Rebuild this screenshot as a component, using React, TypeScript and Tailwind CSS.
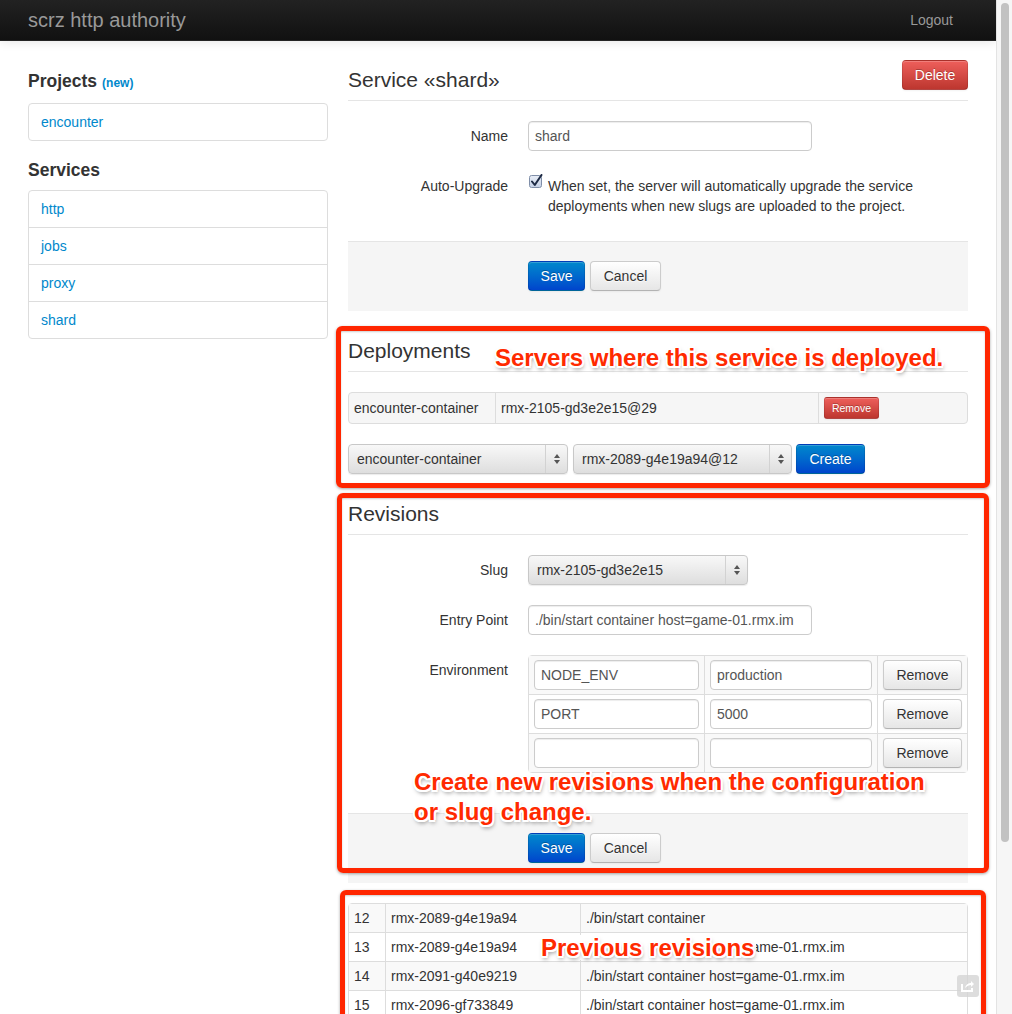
import React from "react";

const btnBase =
  "inline-flex items-center justify-center h-[30px] px-[12px] rounded-[4px] border text-[14px] leading-[20px] whitespace-nowrap";
const btnDefault =
  "border-[#cccccc] border-b-[#b3b3b3] bg-linear-to-b from-[#ffffff] to-[#e6e6e6] text-[#333333] [text-shadow:0_1px_1px_rgba(255,255,255,0.75)] shadow-[inset_0_1px_0_rgba(255,255,255,0.2),0_1px_2px_rgba(0,0,0,0.05)]";
const btnPrimary =
  "border-[rgba(0,0,0,0.1)] border-b-[rgba(0,0,0,0.25)] bg-linear-to-b from-[#0088cc] to-[#0044cc] text-white [text-shadow:0_-1px_0_rgba(0,0,0,0.25)] shadow-[inset_0_1px_0_rgba(255,255,255,0.2),0_1px_2px_rgba(0,0,0,0.05)]";
const btnDanger =
  "border-[rgba(0,0,0,0.1)] border-b-[rgba(0,0,0,0.25)] bg-linear-to-b from-[#ee5f5b] to-[#bd362f] text-white [text-shadow:0_-1px_0_rgba(0,0,0,0.25)] shadow-[inset_0_1px_0_rgba(255,255,255,0.2),0_1px_2px_rgba(0,0,0,0.05)]";

const inputCls =
  "block h-[30px] rounded-[4px] border border-[#cccccc] bg-white px-[6px] py-[4px] text-[14px] leading-[20px] text-[#555555] shadow-[inset_0_1px_1px_rgba(0,0,0,0.075)] outline-none";

const annot =
  "absolute z-20 whitespace-nowrap font-bold text-[24px] leading-[30px] text-[#ff2a00] [text-shadow:2px_0_0_#fff,-2px_0_0_#fff,0_2px_0_#fff,0_-2px_0_#fff,1.5px_1.5px_0_#fff,-1.5px_1.5px_0_#fff,1.5px_-1.5px_0_#fff,-1.5px_-1.5px_0_#fff,1px_3px_4px_rgba(0,0,0,0.5)]";

const redBox =
  "absolute z-10 rounded-[6px] border-[5px] border-[#ff2600] shadow-[0_1px_3px_rgba(0,0,0,0.35),inset_0_1px_2px_rgba(0,0,0,0.2)]";

function Arrows() {
  return (
    <svg width="8" height="12" viewBox="0 0 8 12">
      <path d="M4 1 L7 5 L1 5 Z" fill="#555" />
      <path d="M4 11 L7 7 L1 7 Z" fill="#555" />
    </svg>
  );
}

function FakeSelect({ value, width }: { value: string; width: string }) {
  return (
    <div
      className={`flex h-[30px] items-center rounded-[4px] border border-[#c8c8c8] bg-linear-to-b from-[#f8f8f8] to-[#dedede] text-[14px] text-[#333] shadow-[0_1px_1px_rgba(0,0,0,0.08)] ${width}`}
    >
      <span className="flex-1 truncate pl-[8px]">{value}</span>
      <span className="flex h-full w-[22px] items-center justify-center border-l border-[#d2d2d2]">
        <Arrows />
      </span>
    </div>
  );
}

function Checkbox() {
  return (
    <svg width="15" height="15" viewBox="0 0 15 15" className="absolute left-[1px] top-[3px]">
      <defs>
        <linearGradient id="cbg" x1="0" y1="0" x2="0" y2="1">
          <stop offset="0" stopColor="#e9eef7" />
          <stop offset="1" stopColor="#c5d1e6" />
        </linearGradient>
      </defs>
      <rect x="0.5" y="1.5" width="12" height="12" rx="2" fill="url(#cbg)" stroke="#7f8ea8" />
      <path d="M3 7.5 L5.8 11 L12.5 1" fill="none" stroke="#1d2a44" strokeWidth="2" strokeLinecap="round" strokeLinejoin="round" />
    </svg>
  );
}

function Label({ children }: { children: React.ReactNode }) {
  return <div className="w-[160px] shrink-0 pt-[5px] text-right text-[#333]">{children}</div>;
}

function Legend({ children, right }: { children: React.ReactNode; right?: React.ReactNode }) {
  return (
    <div className="mb-[20px] flex h-[41px] items-start justify-between border-b border-[#e5e5e5]">
      <div className="text-[21px] leading-[40px] text-[#333]">{children}</div>
      {right}
    </div>
  );
}

function NavList({ items }: { items: string[] }) {
  return (
    <div className="rounded-[4px] border border-[#dddddd] bg-white">
      {items.map((it, i) => (
        <div
          key={it}
          className={`px-[12px] py-[8px] leading-[20px] text-[#0088cc] ${i > 0 ? "border-t border-[#dddddd]" : ""}`}
        >
          {it}
        </div>
      ))}
    </div>
  );
}

export default function App() {
  const env = [
    ["NODE_ENV", "production"],
    ["PORT", "5000"],
    ["", ""],
  ];
  const revs = [
    ["12", "rmx-2089-g4e19a94", "./bin/start container"],
    ["13", "rmx-2089-g4e19a94", "./bin/start container host=game-01.rmx.im"],
    ["14", "rmx-2091-g40e9219", "./bin/start container host=game-01.rmx.im"],
    ["15", "rmx-2096-gf733849", "./bin/start container host=game-01.rmx.im"],
    ["16", "rmx-2105-gd3e2e15", "./bin/start container host=game-01.rmx.im"],
  ];
  return (
    <div className="relative flex h-[1014px] w-[1012px] overflow-hidden bg-white font-['Liberation_Sans',Arial,sans-serif] text-[14px] leading-[20px] text-[#333333]">
      <div className="flex min-w-0 flex-1 flex-col">
        {/* navbar */}
        <div className="h-[41px] shrink-0 border-b border-[#252525] bg-linear-to-b from-[#222222] to-[#111111] shadow-[0_1px_10px_rgba(0,0,0,0.1)]">
          <div className="mx-auto flex w-[940px] items-center justify-between">
            <div className="py-[10px] text-[20px] leading-[20px] text-[#999999]">scrz http authority</div>
            <div className="px-[15px] py-[10px] text-[#999999]">Logout</div>
          </div>
        </div>

        <div className="mx-auto flex w-[940px] gap-[20px] pt-[19px]">
          {/* sidebar */}
          <div className="w-[300px] shrink-0">
            <div className="mb-[12px] mt-[11px] flex h-[20px] items-baseline gap-[5px] text-[17.5px] font-bold leading-[20px] text-[#333]">
              <span>Projects</span>
              <span className="text-[12px] leading-[20px] text-[#0088cc]">(new)</span>
            </div>
            <NavList items={["encounter"]} />
            <div className="mb-[10px] mt-[19px] h-[20px] text-[17.5px] font-bold leading-[20px] text-[#333]">Services</div>
            <NavList items={["http", "jobs", "proxy", "shard"]} />
          </div>

          {/* main */}
          <div className="w-[620px] shrink-0">
            <Legend right={<button className={`${btnBase} ${btnDanger} w-[66px]`}>Delete</button>}>
              Service «shard»
            </Legend>

            <div className="mb-[20px] flex">
              <Label>Name</Label>
              <div className="ml-[20px]">
                <input readOnly defaultValue="shard" className={`${inputCls} w-[284px]`} />
              </div>
            </div>

            <div className="mb-[25px] flex">
              <Label>Auto-Upgrade</Label>
              <div className="relative ml-[20px] pl-[20px] pt-[5px]">
                <Checkbox />
                When set, the server will automatically upgrade the service
                <br />
                deployments when new slugs are uploaded to the project.
              </div>
            </div>

            <div className="mb-[20px] flex gap-[5px] border-t border-[#e5e5e5] bg-[#f5f5f5] pb-[20px] pl-[180px] pt-[19px]">
              <button className={`${btnBase} ${btnPrimary} w-[57px]`}>Save</button>
              <button className={`${btnBase} ${btnDefault} w-[71px]`}>Cancel</button>
            </div>

            <Legend>Deployments</Legend>

            <div className="mb-[20px] flex rounded-[4px] border border-[#dddddd] bg-[#f6f6f6]">
              <div className="w-[146px] px-[5px] py-[5px]">encounter-container</div>
              <div className="w-[323px] border-l border-[#dddddd] px-[5px] py-[5px]">rmx-2105-gd3e2e15@29</div>
              <div className="flex-1 border-l border-[#dddddd] px-[5px] py-[4px]">
                <button
                  className={`inline-flex h-[22px] w-[55px] items-center justify-center rounded-[3px] border text-[10.5px] leading-[20px] ${btnDanger}`}
                >
                  Remove
                </button>
              </div>
            </div>

            <div className="mb-[20px] flex items-center gap-[5px]">
              <FakeSelect value="encounter-container" width="w-[220px]" />
              <FakeSelect value="rmx-2089-g4e19a94@12" width="w-[219px]" />
              <button className={`${btnBase} ${btnPrimary} ml-[-1px] w-[69px]`}>Create</button>
            </div>

            <Legend>Revisions</Legend>

            <div className="mb-[20px] flex">
              <Label>Slug</Label>
              <div className="ml-[20px]">
                <FakeSelect value="rmx-2105-gd3e2e15" width="w-[220px]" />
              </div>
            </div>

            <div className="mb-[20px] flex">
              <Label>Entry Point</Label>
              <div className="ml-[20px]">
                <input
                  readOnly
                  defaultValue="./bin/start container host=game-01.rmx.im"
                  className={`${inputCls} w-[284px] text-[#333]`}
                />
              </div>
            </div>

            <div className="mb-[40px] flex">
              <Label>Environment</Label>
              <div className="ml-[20px] w-[440px] rounded-[4px] border border-[#dddddd]">
                {env.map((r, i) => (
                  <div
                    key={i}
                    className={`flex ${i > 0 ? "border-t border-[#dddddd]" : ""} ${i % 2 === 0 ? "bg-[#f9f9f9]" : "bg-white"}`}
                  >
                    <div className="w-[175px] px-[5px] py-[4px]">
                      <input readOnly defaultValue={r[0]} className={`${inputCls} w-full text-[#333]`} />
                    </div>
                    <div className="w-[173px] border-l border-[#dddddd] px-[5px] py-[4px]">
                      <input readOnly defaultValue={r[1]} className={`${inputCls} w-full text-[#333]`} />
                    </div>
                    <div className="flex-1 border-l border-[#dddddd] px-[5px] py-[4px]">
                      <button className={`${btnBase} ${btnDefault} w-[79px]`}>Remove</button>
                    </div>
                  </div>
                ))}
              </div>
            </div>

            <div className="mb-[20px] flex gap-[5px] border-t border-[#e5e5e5] bg-[#f5f5f5] pb-[20px] pl-[180px] pt-[19px]">
              <button className={`${btnBase} ${btnPrimary} w-[57px]`}>Save</button>
              <button className={`${btnBase} ${btnDefault} w-[71px]`}>Cancel</button>
            </div>

            <div className="rounded-[4px] border border-[#dddddd]">
              {revs.map((r, i) => (
                <div
                  key={r[0]}
                  className={`flex ${i > 0 ? "border-t border-[#dddddd]" : ""} ${i % 2 === 0 ? "bg-[#f9f9f9]" : "bg-white"}`}
                >
                  <div className="w-[36px] px-[5px] py-[4px]">{r[0]}</div>
                  <div className="w-[195px] border-l border-[#dddddd] px-[5px] py-[4px]">{r[1]}</div>
                  <div className="flex-1 border-l border-[#dddddd] px-[5px] py-[4px]">{r[2]}</div>
                </div>
              ))}
            </div>
          </div>
        </div>
      </div>

      {/* scrollbar */}
      <div className="flex w-[16px] shrink-0 flex-col items-center border-l border-[#e3e3e3] bg-[#f6f6f6] pt-[3px]">
        <div className="h-[839px] w-[8px] rounded-full bg-[#c2c2c2]" />
      </div>

      {/* annotation overlays */}
      <div className={`${redBox} left-[336px] top-[326px] h-[162px] w-[654px]`} />
      <div className={`${redBox} left-[337px] top-[493px] h-[380px] w-[652px]`} />
      <div className={`${redBox} left-[340px] top-[890px] h-[200px] w-[646px]`} />

      <div className={`${annot} left-[495px] top-[343px]`}>Servers where this service is deployed.</div>
      <div className={`${annot} left-[414px] top-[767px]`}>
        Create new revisions when the configuration
        <br />
        or slug change.
      </div>
      <div className="absolute left-[538px] top-[935px] z-[15] h-[25px] w-[218px] bg-white" />
      <div className={`${annot} left-[541px] top-[933px]`}>Previous revisions</div>

      <div className="absolute left-[957px] top-[975px] z-[5] flex h-[22px] w-[22px] items-center justify-center rounded-[3px] bg-[#d4d4d4]/80">
        <svg width="14" height="12" viewBox="0 0 14 12">
          <path d="M1 4 V11 H11 V8" fill="none" stroke="#fff" strokeWidth="2" />
          <path d="M4 8 C5 4 8 3 10 3 V1 L13 4 L10 7 V5 C8 5 6 6 4 8 Z" fill="#fff" />
        </svg>
      </div>
    </div>
  );
}
